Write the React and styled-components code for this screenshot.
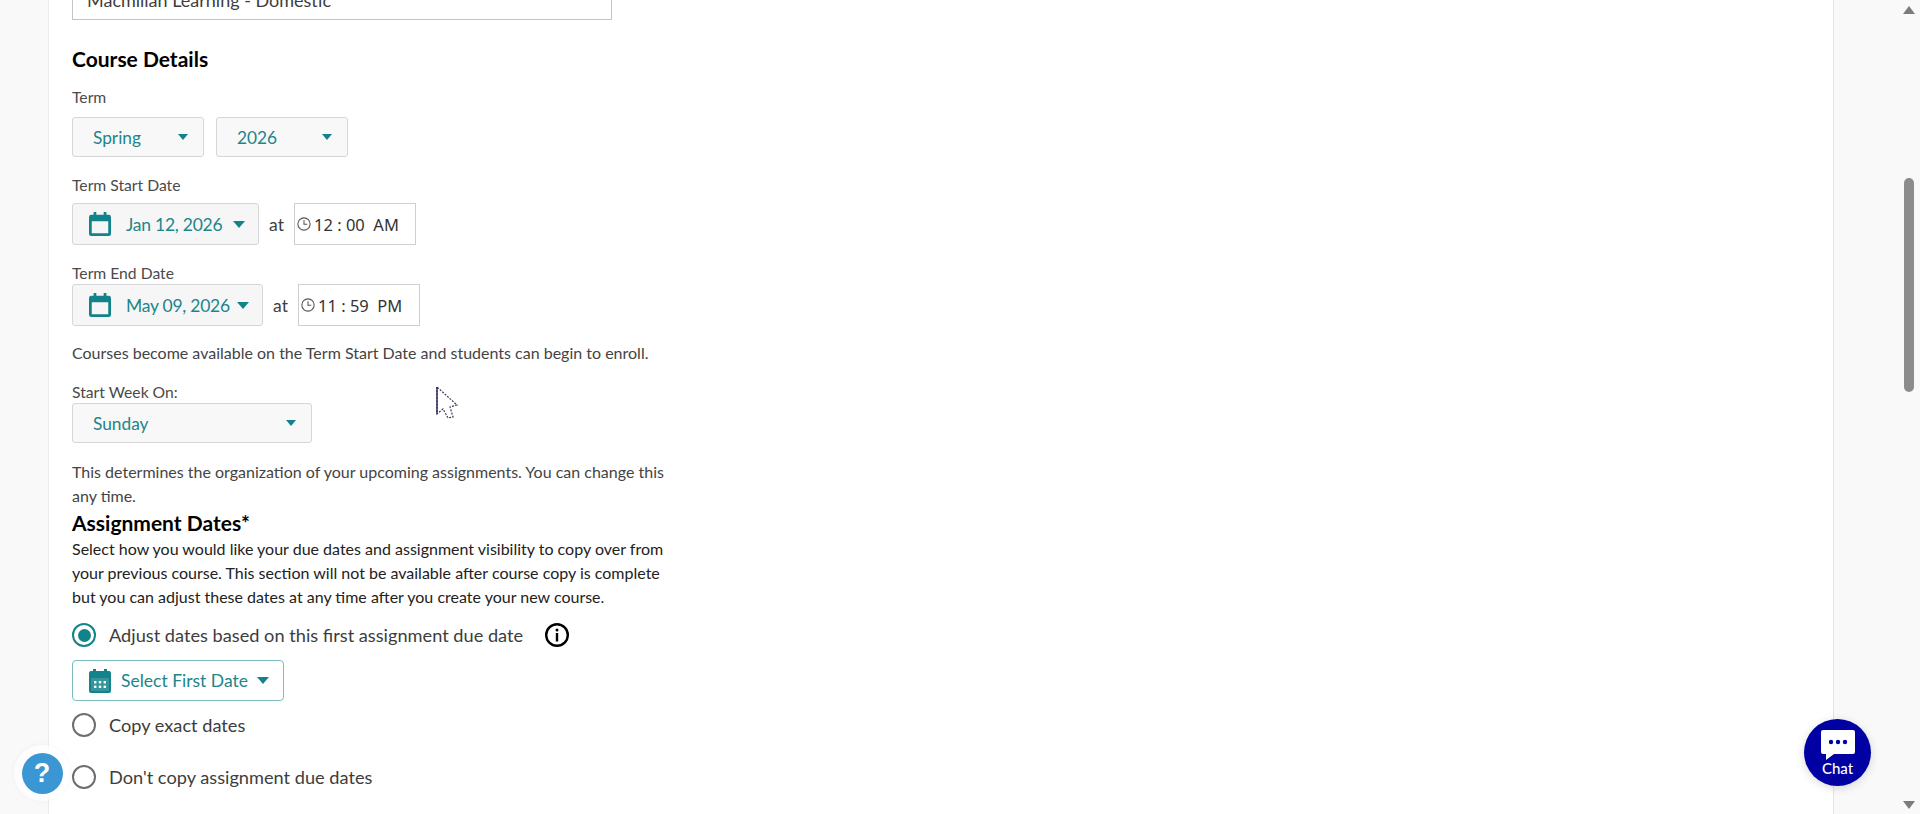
import React from 'react';
import styled, { createGlobalStyle } from 'styled-components';

const teal = '#21858a';
const FONT = '"Lato", "Open Sans", sans-serif';

const GlobalStyle = createGlobalStyle`
  html, body {
    margin: 0;
    padding: 0;
    height: 100%;
    overflow: hidden;
    background: #f9f9f9;
    font-family: ${FONT};
  }
`;

const Page = styled.div`
  position: relative;
  height: 814px;
  overflow: hidden;
  padding-left: 48px;
  display: flex;
  background: #f9f9f9;
`;

const Panel = styled.main`
  width: 1786px;
  height: 814px;
  box-sizing: border-box;
  flex: none;
  background: #fff;
  border-left: 1px solid #ececec;
  border-right: 1px solid #e4e4e4;
  padding: 0 0 0 23px;
  display: flex;
  flex-direction: column;
  align-items: flex-start;
  color: #3d3d3d;
`;

const TopInput = styled.div`
  width: 540px;
  height: 40px;
  margin-top: -20px;
  box-sizing: border-box;
  border: 1px solid #c4c4c4;
  padding: 0 14px;
  line-height: 38px;
  font-size: 18px;
  color: #3d3d3d;
  flex: none;
`;

const Heading = styled.h2`
  margin: ${p => p.$top || 0}px 0 0;
  font-size: 21px;
  line-height: 24px;
  font-weight: 700;
  color: #000;
`;

const Label = styled.div`
  margin-top: ${p => p.$top || 0}px;
  line-height: 20px;
  font-size: 15.7px;
  color: #4a4a4a;
`;

const Row = styled.div`
  display: flex;
  align-items: center;
  gap: ${p => p.$gap || 0}px;
  margin-top: ${p => p.$top || 0}px;
`;

const SelectBox = styled.div`
  width: ${p => p.$width}px;
  height: 40px;
  margin-top: ${p => p.$top || 0}px;
  box-sizing: border-box;
  display: flex;
  align-items: center;
  justify-content: space-between;
  padding: 0 15px 0 20px;
  background: #f8f8f8;
  border: 1px solid #d6d6d6;
  border-radius: 3px;
  color: ${teal};
  font-size: 17.3px;
`;

const Caret = styled.span`
  width: 0;
  height: 0;
  flex: none;
  border-left: ${p => p.$size || 5}px solid transparent;
  border-right: ${p => p.$size || 5}px solid transparent;
  border-top: ${p => (p.$size || 5) + 1}px solid #12838a;
`;

const DateButton = styled.div`
  width: ${p => p.$width}px;
  height: 42px;
  box-sizing: border-box;
  display: flex;
  align-items: center;
  padding: 0 13px 0 16px;
  background: #f6f6f6;
  border: 1px solid #d6d6d6;
  border-radius: 3px;
  color: ${teal};
  font-size: 17.5px;
`;

const DateText = styled.span`
  margin-left: 15px;
  flex: 1;
  white-space: nowrap;
  letter-spacing: -0.25px;
`;

const At = styled.span`
  width: 35px;
  text-align: center;
  font-size: 17.5px;
  color: #3d3d3d;
`;

const TimeBox = styled.div`
  width: 122px;
  height: 42px;
  box-sizing: border-box;
  display: flex;
  align-items: center;
  gap: 3px;
  padding-left: 2px;
  border: 1px solid #cfcfcf;
  font-family: "Noto Sans", sans-serif;
  font-size: 16.5px;
  color: #333;
  white-space: pre;
`;

const Note = styled.p`
  margin: ${p => p.$top || 0}px 0 0;
  width: ${p => p.$width || 610}px;
  line-height: 24px;
  font-size: 16px;
  color: ${p => p.$dark ? '#222' : '#444'};
`;

const RadioRow = styled.label`
  display: flex;
  align-items: center;
  height: 26px;
  margin-top: ${p => p.$top || 0}px;
  font-size: 18.2px;
  color: #3d3d3d;
`;

const Radio = styled.span`
  width: 24px;
  height: 24px;
  box-sizing: border-box;
  flex: none;
  margin-right: 13px;
  border-radius: 50%;
  border: 2.5px solid ${p => p.$checked ? '#12838a' : '#6e6e6e'};
  display: flex;
  align-items: center;
  justify-content: center;

  &::after {
    content: '';
    display: ${p => p.$checked ? 'block' : 'none'};
    width: 13px;
    height: 13px;
    border-radius: 50%;
    background: #12838a;
  }
`;

const InfoIcon = styled.svg`
  width: 26px;
  height: 26px;
  margin-left: 21px;
`;

const Glyph = styled.svg`
  flex: none;
`;

const FirstDateButton = styled.div`
  width: 212px;
  height: 41px;
  margin-top: 12px;
  box-sizing: border-box;
  display: flex;
  align-items: center;
  padding: 0 12px 0 16px;
  border: 1px solid #7cbcc0;
  border-radius: 4px;
  color: ${teal};
  font-size: 17.5px;
  white-space: nowrap;

  span:first-of-type {
    margin: 0 9px 0 10px;
  }
`;

const HelpHalo = styled.div`
  position: absolute;
  left: 14px;
  top: 745px;
  width: 56px;
  height: 56px;
  border-radius: 50%;
  background: rgba(255, 255, 255, 0.7);
  box-shadow: 0 0 6px rgba(0, 0, 0, 0.04);
  display: flex;
  align-items: center;
  justify-content: center;
`;

const HelpButton = styled.div`
  width: 41px;
  height: 41px;
  border-radius: 50%;
  background: #3a97d4;
  color: #fff;
  font-family: "Liberation Sans", sans-serif;
  font-weight: 700;
  font-size: 27px;
  line-height: 41px;
  text-align: center;
`;

const ChatButton = styled.div`
  position: absolute;
  left: 1804px;
  top: 719px;
  width: 67px;
  height: 67px;
  border-radius: 50%;
  background: #0000a3;
  box-shadow: 0 2px 10px rgba(0, 0, 0, 0.15);
  color: #fff;
  display: flex;
  flex-direction: column;
  align-items: center;
  padding-top: 11px;
  box-sizing: border-box;
  font-size: 15px;
  line-height: 16px;
  font-weight: 500;
`;

const Track = styled.div`
  position: absolute;
  right: 5px;
  top: 0;
  bottom: 0;
  width: 12px;
`;

const ArrowUp = styled.span`
  position: absolute;
  left: 0;
  top: 6px;
  border-left: 6px solid transparent;
  border-right: 6px solid transparent;
  border-bottom: 8px solid #7c7c7c;
`;

const ArrowDown = styled.span`
  position: absolute;
  left: 0;
  bottom: 5px;
  border-left: 6px solid transparent;
  border-right: 6px solid transparent;
  border-top: 8px solid #7c7c7c;
`;

const Thumb = styled.span`
  position: absolute;
  left: 1px;
  top: 178px;
  width: 10px;
  height: 214px;
  border-radius: 5px;
  background: #8c8c8c;
`;

const Cursor = styled.svg`
  position: absolute;
  left: 435px;
  top: 385px;
`;

const CalendarOutline = () => (
  <Glyph width="22" height="24" viewBox="0 0 24 26">
    <path fill="#12838a" d="M5 0h3v3h8V0h3v3h2.5A2.5 2.5 0 0 1 24 5.5v18a2.5 2.5 0 0 1-2.5 2.5h-19A2.5 2.5 0 0 1 0 23.5v-18A2.5 2.5 0 0 1 2.5 3H5zM3 10v13h18V10z" />
  </Glyph>
);

const CalendarFilled = () => (
  <Glyph width="22" height="24" viewBox="0 0 22 24">
    <path fill="#12838a" d="M4 0h3v2h8V0h3v2h2a2 2 0 0 1 2 2v18a2 2 0 0 1-2 2H2a2 2 0 0 1-2-2V4a2 2 0 0 1 2-2h2zM2 9v13h18V9z" />
    <path fill="#12838a" d="M2 9h18v13H2z" opacity=".85" />
    <g fill="#fff">
      <rect x="5" y="12" width="2.4" height="2.4" /><rect x="9.8" y="12" width="2.4" height="2.4" /><rect x="14.6" y="12" width="2.4" height="2.4" />
      <rect x="5" y="16.6" width="2.4" height="2.4" /><rect x="9.8" y="16.6" width="2.4" height="2.4" /><rect x="14.6" y="16.6" width="2.4" height="2.4" />
    </g>
  </Glyph>
);

const Clock = () => (
  <Glyph width="14" height="14" viewBox="0 0 13 13" fill="none" stroke="#555" strokeWidth="1">
    <circle cx="6.5" cy="6.5" r="5.7" />
    <path d="M6.5 3v3.7h3" />
  </Glyph>
);

const DateField = ({ width, children }) => (
  <DateButton $width={width}>
    <CalendarOutline />
    <DateText>{children}</DateText>
    <Caret $size={6} />
  </DateButton>
);

const App = () => (
  <Page>
    <GlobalStyle />
    <Panel>
      <TopInput>Macmillan Learning - Domestic</TopInput>
      <Heading $top={27}>Course Details</Heading>
      <Label $top={16}>Term</Label>
      <Row $gap={12} $top={10}>
        <SelectBox $width={132}>Spring<Caret /></SelectBox>
        <SelectBox $width={132}>2026<Caret /></SelectBox>
      </Row>
      <Label $top={18}>Term Start Date</Label>
      <Row $top={8}>
        <DateField width={187}>Jan 12, 2026</DateField>
        <At>at</At>
        <TimeBox><Clock />{'12 : 00  AM'}</TimeBox>
      </Row>
      <Label $top={18}>Term End Date</Label>
      <Row $top={1}>
        <DateField width={191}>May 09, 2026</DateField>
        <At>at</At>
        <TimeBox><Clock />{'11 : 59  PM'}</TimeBox>
      </Row>
      <Note $top={15}>Courses become available on the Term Start Date and students can begin to enroll.</Note>
      <Label $top={17}>Start Week On:</Label>
      <SelectBox $width={240} $top={1}>Sunday<Caret /></SelectBox>
      <Note $top={17} $width={605}>This determines the organization of your upcoming assignments. You can change this any time.</Note>
      <Heading $top={3}>Assignment Dates*</Heading>
      <Note $top={2} $dark $width={605}>Select how you would like your due dates and assignment visibility to copy over from your previous course. This section will not be available after course copy is complete but you can adjust these dates at any time after you create your new course.</Note>
      <RadioRow $top={13}>
        <Radio $checked />Adjust dates based on this first assignment due date
        <InfoIcon viewBox="0 0 26 26">
          <circle cx="13" cy="13" r="10.8" fill="none" stroke="#000" strokeWidth="2.4" />
          <circle cx="13" cy="8" r="1.5" fill="#000" />
          <rect x="11.8" y="11" width="2.4" height="8.5" fill="#000" />
        </InfoIcon>
      </RadioRow>
      <FirstDateButton>
        <CalendarFilled />
        <span>Select First Date</span>
        <Caret $size={6} />
      </FirstDateButton>
      <RadioRow $top={11}><Radio />Copy exact dates</RadioRow>
      <RadioRow $top={26}><Radio />Don't copy assignment due dates</RadioRow>
    </Panel>
    <Cursor width="24" height="36" viewBox="0 0 24 36" fill="#fff">
      <path d="M2 2v27l6-5 5 9 5-1-3-10 7-2z" stroke="#3a3a5a" strokeWidth="1.2" strokeDasharray="2 1.3" />
      <path d="M2 2v27" stroke="#26265a" strokeWidth="1.4" />
    </Cursor>
    <HelpHalo><HelpButton>?</HelpButton></HelpHalo>
    <ChatButton>
      <svg width="34" height="30" viewBox="0 0 34 30">
        <path fill="#fff" d="M2 0h30a2 2 0 0 1 2 2v20a2 2 0 0 1-2 2H13l-8 6v-6H2a2 2 0 0 1-2-2V2a2 2 0 0 1 2-2z" />
        <circle cx="10" cy="12" r="2.2" fill="#0000a3" />
        <circle cx="17" cy="12" r="2.2" fill="#0000a3" />
        <circle cx="24" cy="12" r="2.2" fill="#0000a3" />
      </svg>
      Chat
    </ChatButton>
    <Track>
      <ArrowUp />
      <Thumb />
      <ArrowDown />
    </Track>
  </Page>
);

export default App;
